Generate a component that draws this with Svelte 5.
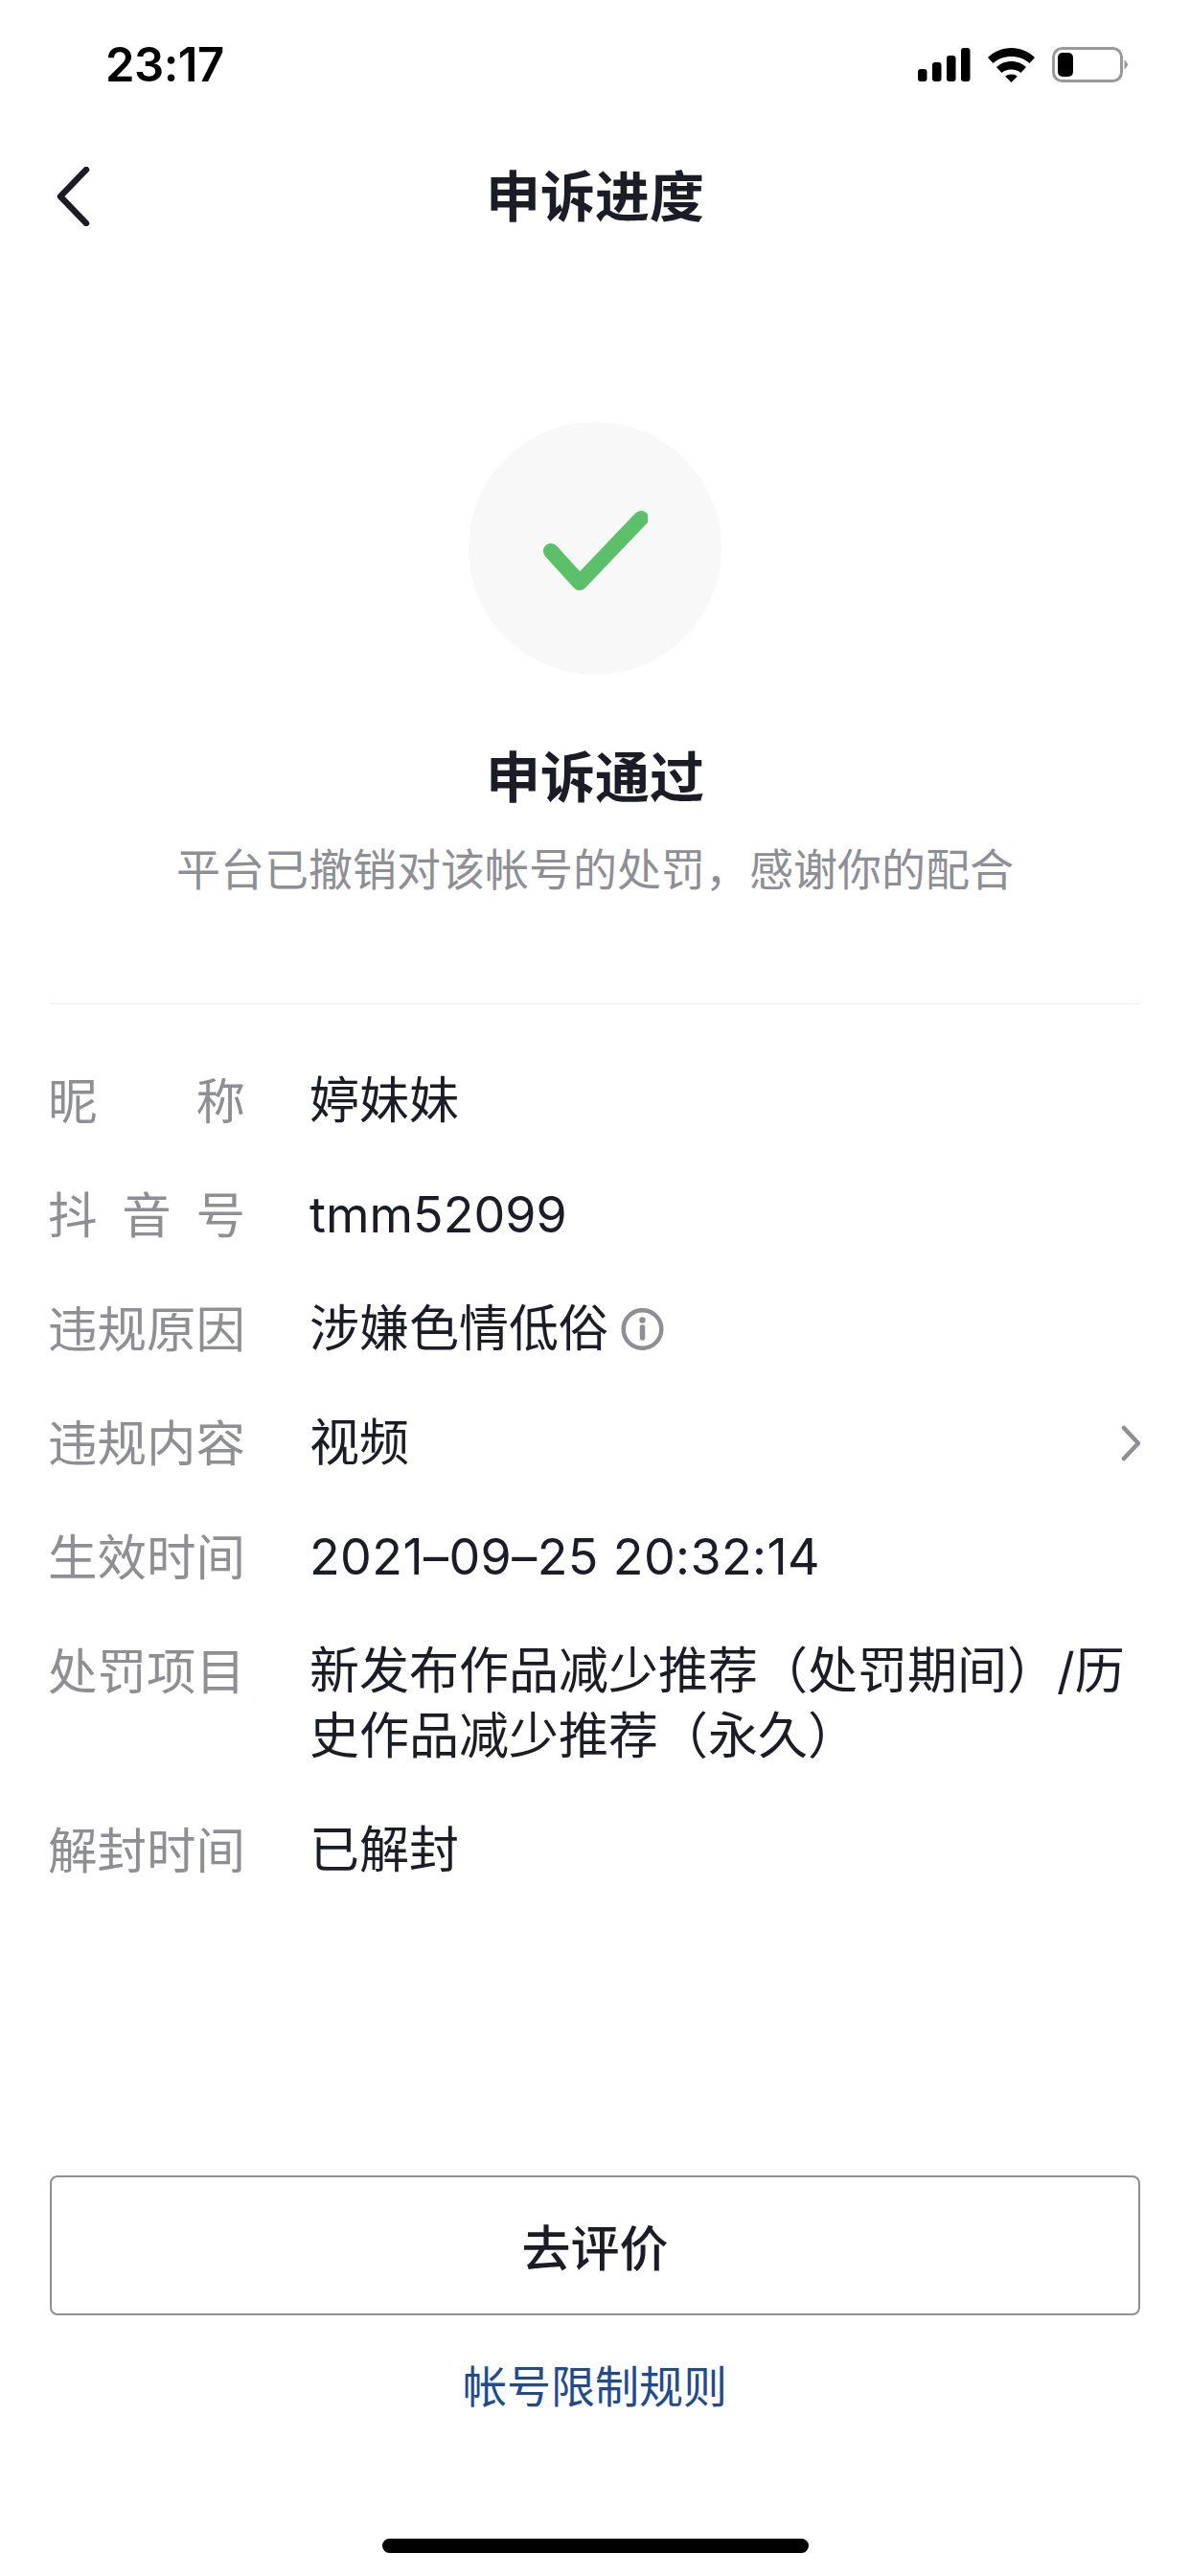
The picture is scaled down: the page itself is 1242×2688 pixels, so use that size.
<script lang="ts">
  const rows = [
    { label: '昵称', value: '婷妹妹' },
    { label: '抖音号', value: 'tmm52099' },
    { label: '违规原因', value: '涉嫌色情低俗', info: true },
    { label: '违规内容', value: '视频', arrow: true },
    { label: '生效时间', value: '2021–09–25 20:32:14', wide: true },
    { label: '处罚项目', value: '新发布作品减少推荐（处罚期间）/历史作品减少推荐（永久）' },
    { label: '解封时间', value: '已解封' }
  ]
</script>

<div class="page">
  <div class="status-bar">
    <span class="time">23:17</span>
    <div class="status-icons">
      <svg width="55" height="35" viewBox="0 0 55 35" fill="#000">
        <rect x="0" y="22" width="9.500" height="13" rx="3" />
        <rect x="15" y="15" width="9.500" height="20" rx="3" />
        <rect x="30" y="8" width="9.500" height="27" rx="3" />
        <rect x="45" y="0" width="9.500" height="35" rx="3" />
      </svg>
      <svg width="49" height="36" viewBox="0 0 49 36" fill="#000">
        <path d="M24.500 0C15 0 6.500 3.800 0 10L5.500 16C10.500 11.500 17 9 24.500 9S38.500 11.500 43.500 16L49 10C42.500 3.800 34 0 24.500 0Z" />
        <path d="M24.500 14C18.500 14 13 16.200 9 20L14.500 26C17 23.700 20.500 22.500 24.500 22.500S32 23.700 34.500 26L40 20C36 16.200 30.500 14 24.500 14Z" />
        <path d="M24.500 27.500C21.800 27.500 19.800 28.400 18.200 29.800L24.500 36L30.800 29.800C29.200 28.400 27.200 27.500 24.500 27.500Z" />
      </svg>
      <svg class="battery" width="80" height="37" viewBox="0 0 80 37">
        <rect x="1.500" y="1.500" width="71" height="34" rx="9" fill="none" stroke="#999" stroke-width="3" />
        <rect x="6" y="6" width="16" height="25" rx="5" fill="#000" />
        <path d="M75.500 13L79.500 18.500L75.500 24Z" fill="#999" />
      </svg>
    </div>
  </div>

  <header class="nav">
    <svg class="back" width="36" height="62" viewBox="0 0 36 62" fill="none">
      <path d="M32 3L5 31L32 59" stroke="#1a1c26" stroke-width="6.500" stroke-linecap="round" stroke-linejoin="round" />
    </svg>
    <h1>申诉进度</h1>
  </header>

  <section class="result">
    <div class="badge">
      <svg width="110" height="96" viewBox="0 0 110 96" fill="none">
        <path d="M9 51L39 84L103 17" stroke="#5ac169" stroke-width="16" stroke-linecap="round" stroke-linejoin="round" />
      </svg>
    </div>
    <h2>申诉通过</h2>
    <p>平台已撤销对该帐号的处罚，感谢你的配合</p>
  </section>

  <dl class="details">
    {#each rows as row}
      <div class="row">
        <dt>{row.label}</dt>
        <dd class:wide={row.wide}>
          <span>{row.value}</span>
          {#if row.info}
            <svg class="info" width="45" height="44" viewBox="0 0 45 44" fill="none">
              <circle cx="22.500" cy="22" r="19.800" stroke="#8e8f95" stroke-width="4.500" />
              <circle cx="22.500" cy="12.500" r="3.200" fill="#8e8f95" />
              <path d="M22.500 20V31" stroke="#8e8f95" stroke-width="5.500" stroke-linecap="round" />
            </svg>
          {/if}
        </dd>
        {#if row.arrow}
          <svg class="arrow" width="22" height="38" viewBox="0 0 22 38" fill="none">
            <path d="M3 3L18 19L3 35" stroke="#8e8f95" stroke-width="4.500" stroke-linecap="round" stroke-linejoin="round" />
          </svg>
        {/if}
      </div>
    {/each}
  </dl>

  <div class="actions">
    <button class="rate">去评价</button>
    <a class="rules" href="#rules">帐号限制规则</a>
  </div>

  <div class="home-bar"></div>
</div>

<style>
  :global(body) {
    margin: 0;
    background: #fff;
  }

  .page {
    height: 2688px;
    display: flex;
    flex-direction: column;
    font-family: Inter, "Noto Sans CJK SC", "Liberation Sans", sans-serif;
    color: #1a1c26;
    overflow: hidden;
  }

  .status-bar {
    height: 37px;
    padding: 49px 64px 0 110px;
    display: flex;
    justify-content: space-between;
    align-items: center;
  }

  .time {
    font-family: Inter, sans-serif;
    font-size: 49px;
    font-weight: 600;
    color: #000;
    line-height: 37px;
    letter-spacing: -0.5px;
  }

  .status-icons {
    display: flex;
    align-items: center;
    gap: 18px;
  }

  .nav {
    height: 120px;
    margin-top: 59px;
    position: relative;
    display: flex;
    align-items: center;
    justify-content: center;
  }

  .back {
    position: absolute;
    left: 58px;
    top: 29px;
  }

  h1 {
    margin: 2px 0 0;
    font-size: 57px;
    font-weight: 700;
    line-height: 80px;
  }

  .result {
    margin: 175px 52px 0;
    display: flex;
    flex-direction: column;
    align-items: center;
    border-bottom: 1px solid #eeeeee;
    height: 607px;
  }

  .badge {
    width: 264px;
    height: 264px;
    border-radius: 50%;
    background: #f8f8f8;
    display: flex;
    align-items: center;
    justify-content: center;
  }

  h2 {
    margin: 68px 0 0;
    font-size: 57px;
    font-weight: 700;
    line-height: 80px;
  }

  p {
    margin: 23px 0 0;
    font-size: 46px;
    line-height: 64px;
    color: #8e8f95;
    white-space: nowrap;
  }

  .details {
    margin: 67px 52px 0 50px;
    display: flex;
    flex-direction: column;
    gap: 51px;
  }

  .row {
    display: flex;
    gap: 67px;
    font-size: 52px;
    line-height: 68px;
    position: relative;
  }

  dt {
    width: 206px;
    flex: none;
    font-size: 51.500px;
    color: #8e8f95;
    text-align: justify;
    text-align-last: justify;
  }

  dd {
    margin: 0;
    flex: 1;
    display: flex;
    align-items: center;
    gap: 13px;
  }

  dd.wide {
    letter-spacing: 0.400px;
  }

  .arrow {
    position: absolute;
    right: -2px;
    top: 15px;
  }

  .actions {
    margin: auto 52px 0;
    display: flex;
    flex-direction: column;
    align-items: center;
  }

  .rate {
    width: 100%;
    height: 146px;
    background: #fff;
    border: 2px solid #8e8f95;
    border-radius: 8px;
    font-family: inherit;
    font-size: 51px;
    font-weight: 500;
    color: #1a1c26;
  }

  .rules {
    margin-top: 42px;
    font-size: 46px;
    line-height: 64px;
    color: #1f4b8f;
    text-decoration: none;
  }

  .home-bar {
    width: 445px;
    height: 15px;
    border-radius: 8px;
    background: #000;
    margin: 127px auto 24px;
    flex: none;
  }
</style>
